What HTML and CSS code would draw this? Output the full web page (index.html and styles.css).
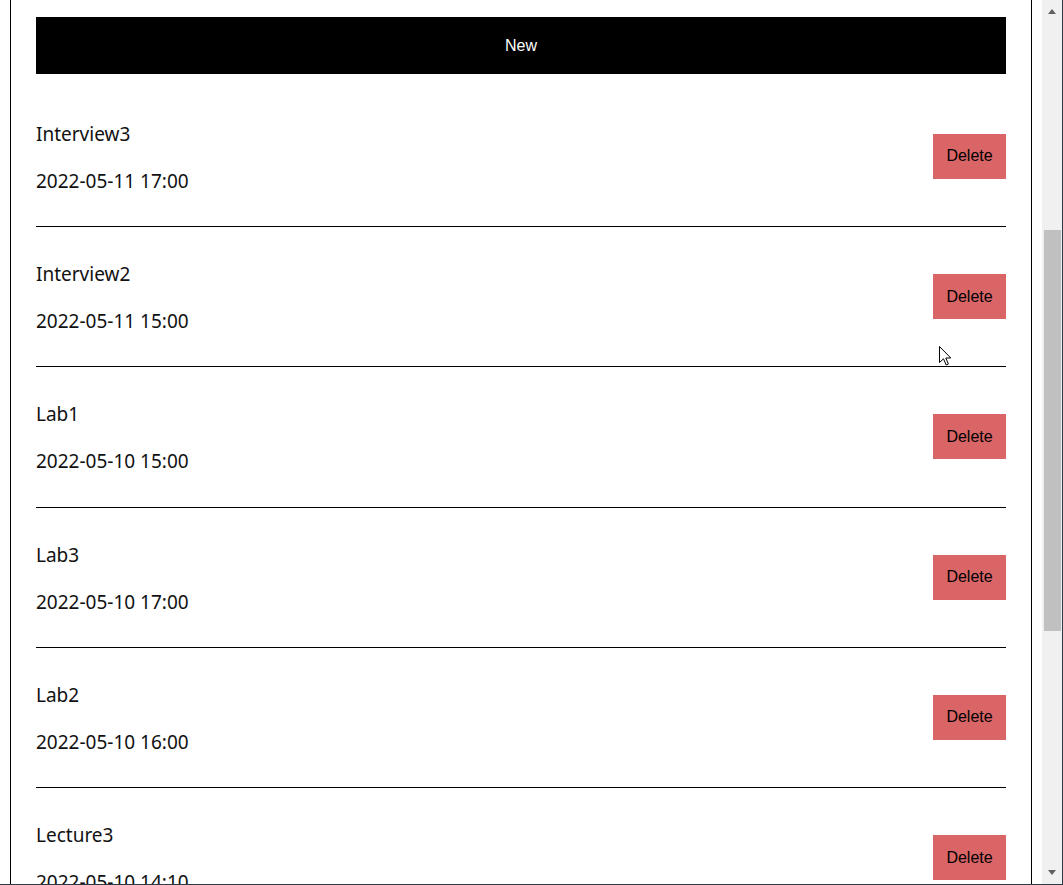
FILE: index.html
```html
<!DOCTYPE html>
<html lang="en">
<head>
<meta charset="utf-8">
<title>Events</title>
<link rel="stylesheet" href="styles.css">
</head>
<body>
<div class="page">
  <button class="new-btn">New</button>
  <ul class="list">
    <li class="item"><div class="info"><p class="title">Interview3</p><p class="date">2022-05-11 17:00</p></div><button class="delete">Delete</button></li>
    <li class="item"><div class="info"><p class="title">Interview2</p><p class="date">2022-05-11 15:00</p></div><button class="delete">Delete</button></li>
    <li class="item"><div class="info"><p class="title">Lab1</p><p class="date">2022-05-10 15:00</p></div><button class="delete">Delete</button></li>
    <li class="item"><div class="info"><p class="title">Lab3</p><p class="date">2022-05-10 17:00</p></div><button class="delete">Delete</button></li>
    <li class="item"><div class="info"><p class="title">Lab2</p><p class="date">2022-05-10 16:00</p></div><button class="delete">Delete</button></li>
    <li class="item"><div class="info"><p class="title">Lecture3</p><p class="date">2022-05-10 14:10</p></div><button class="delete">Delete</button></li>
  </ul>
</div>
<div class="scrollbar">
  <span class="arrow arrow-up"></span>
  <span class="thumb"></span>
  <span class="arrow arrow-down"></span>
</div>
<div class="frame-right"></div>
<div class="frame-bottom"></div>
<svg class="cursor" width="13" height="21" viewBox="0 0 13 21"><path d="M0.5 0.5 L0.5 16.5 L4.5 12.8 L7.2 19 L9.4 18 L6.8 12 L11.8 12 Z" fill="#fff" stroke="#000" stroke-width="1" stroke-linejoin="miter"/></svg>
</body>
</html>
```

FILE: styles.css
```css
html, body {
  margin: 0;
  height: 100%;
  overflow: hidden;
  background: #fff;
}

body {
  padding: 0 31px 0 10px;
  font-family: "Noto Sans", "Open Sans", sans-serif;
  color: #000;
}

.page {
  border-left: 1px solid #000;
  border-right: 1px solid #000;
  padding: 17px 25px 0;
  min-height: 100%;
}

.new-btn {
  display: block;
  width: 100%;
  height: 57px;
  margin: 0 0 12.75px;
  padding: 0;
  border: 0;
  background: #000;
  color: #fff;
  font: 16px "Liberation Sans", Arial, sans-serif;
}

.list {
  list-style: none;
  margin: 0;
  padding: 0;
}

.item {
  display: flex;
  align-items: center;
  justify-content: space-between;
  height: 140.25px;
  box-sizing: border-box;
  border-bottom: 1px solid #000;
}

.info {
  padding-top: 2px;
}

.title,
.date {
  margin: 0;
  font-size: 19px;
  line-height: 26px;
  color: #111;
}

.date {
  margin-top: 21px;
}

.delete {
  width: 73px;
  height: 45px;
  padding: 0;
  border: 0;
  background: #d96567;
  color: #000;
  font: 16px "Liberation Sans", Arial, sans-serif;
}

.scrollbar {
  position: fixed;
  top: 0;
  right: 1px;
  width: 20px;
  height: 884px;
  background: #f0f0f0;
}

.thumb {
  position: absolute;
  left: 2px;
  top: 230px;
  width: 17px;
  height: 401px;
  background: #c0c0c0;
}

.arrow {
  position: absolute;
  left: 6px;
  width: 0;
  height: 0;
  border-left: 4.5px solid transparent;
  border-right: 4.5px solid transparent;
}

.arrow-up {
  top: 9px;
  border-bottom: 5px solid #606060;
}

.arrow-down {
  bottom: 9px;
  border-top: 5px solid #606060;
}

.frame-right {
  position: fixed;
  top: 0;
  right: 0;
  width: 1px;
  height: 100%;
  background: #2e3a44;
}

.frame-bottom {
  position: fixed;
  left: 0;
  bottom: 0;
  width: 100%;
  height: 1px;
  background: #2e3a44;
}

.cursor {
  position: fixed;
  left: 939px;
  top: 346px;
}
```
